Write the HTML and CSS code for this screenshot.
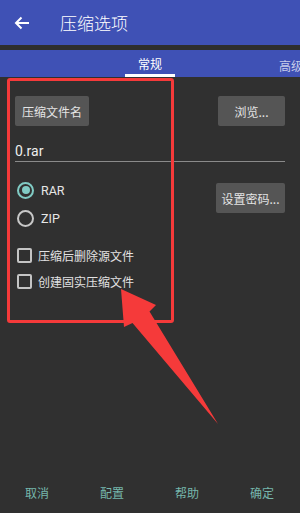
FILE: index.html
```html
<!DOCTYPE html>
<html lang="zh-CN">
<head>
  <meta charset="UTF-8">
  <meta name="viewport" content="width=device-width, initial-scale=1.0">
  <title>压缩选项</title>
  <link rel="stylesheet" href="styles.css">
</head>
<body>
  <div class="screen">
    <header class="toolbar">
      <svg class="back" width="16" height="14" viewBox="0 0 16 14">
        <path d="M15 7H2M7.5 1.5L2 7l5.5 5.5" fill="none" stroke="#fff" stroke-width="2"/>
      </svg>
      <span class="title">压缩选项</span>
    </header>
    <div class="strip"></div>
    <nav class="tabs">
      <span class="tab active">常规</span>
      <span class="tab next">高级</span>
    </nav>

    <main class="content">
      <div class="row">
        <button class="btn">压缩文件名</button>
        <button class="btn">浏览...</button>
      </div>

      <div class="field">0.rar</div>

      <div class="row options">
        <div class="radios">
          <label class="radio checked"><span class="dot"></span>RAR</label>
          <label class="radio"><span class="dot"></span>ZIP</label>
        </div>
        <button class="btn pwd">设置密码...</button>
      </div>

      <div class="checks">
        <label class="check"><span class="box"></span>压缩后删除源文件</label>
        <label class="check"><span class="box"></span>创建固实压缩文件</label>
      </div>
    </main>

    <footer class="actions">
      <span>取消</span>
      <span>配置</span>
      <span>帮助</span>
      <span>确定</span>
    </footer>

    <!-- annotation -->
    <div class="mark"></div>
    <svg class="arrow" width="300" height="513" viewBox="0 0 300 513">
      <polygon points="121,289 156,305 149.5,311.5 218,424 132.5,323 124,327" fill="#f53a3a"/>
    </svg>
  </div>
</body>
</html>
```

FILE: styles.css
```css
* {
  box-sizing: border-box;
}
body {
  margin: 0;
  background: #303030;
  font-family: "Noto Sans CJK SC", Roboto, sans-serif;
  color: #e2e2e2;
}
.screen {
  position: relative;
  width: 300px;
  height: 513px;
  display: flex;
  flex-direction: column;
  overflow: hidden;
}
.toolbar {
  height: 45px;
  background: #3f51b5;
  display: flex;
  align-items: center;
  padding-left: 14px;
}
.back {
  display: block;
}
.title {
  margin-left: 30px;
  font-size: 17px;
  font-weight: 300;
  color: #fff;
}
.strip {
  height: 5px;
  background: #2e2e2e;
}
.tabs {
  height: 27px;
  background: #3f51b5;
  position: relative;
  display: flex;
  white-space: nowrap;
}
.tab {
  flex-shrink: 0;
  font-size: 12px;
  color: #dde0f2;
  line-height: 27px;
  padding-top: 2px;
}
.tab.active {
  width: 50px;
  margin-left: 125px;
  text-align: center;
  color: #fff;
  border-bottom: 3px solid #fff;
  line-height: 23px;
}
.tab.next {
  margin-left: 104px;
  color: #c8cdea;
}
.content {
  padding: 19px 15px 0;
}
.row {
  display: flex;
  justify-content: space-between;
  align-items: flex-start;
}
.btn {
  height: 30px;
  padding: 0 7px;
  border: none;
  border-radius: 2px;
  background: #555;
  color: #e4e4e4;
  font-family: inherit;
  font-size: 12px;
}
.btn:last-child {
  width: 67px;
}
.field {
  margin-top: 13px;
  height: 23px;
  padding-top: 2px;
  font-family: Roboto, sans-serif;
  font-size: 14px;
  color: #eee;
  line-height: 20px;
  border-bottom: 1px solid #8a8a8a;
}
.options {
  margin-top: 19px;
}
.radios {
  display: flex;
  flex-direction: column;
  gap: 10px;
}
.radio {
  display: flex;
  align-items: center;
  height: 18px;
  font-family: Roboto, sans-serif;
  font-size: 12.5px;
  color: #e6e6e6;
}
.dot {
  width: 17px;
  height: 17px;
  margin: 0 7px 0 2px;
  border: 2px solid #c8c8c8;
  border-radius: 50%;
  position: relative;
}
.radio.checked .dot {
  border-color: #80cbc4;
}
.radio.checked .dot::after {
  content: "";
  position: absolute;
  left: 2.5px;
  top: 2.5px;
  width: 8px;
  height: 8px;
  border-radius: 50%;
  background: #80cbc4;
}
.btn.pwd {
  margin-top: 2px;
  width: 69px;
  padding: 0;
}
.checks {
  margin-top: 21px;
  display: flex;
  flex-direction: column;
  gap: 11px;
}
.check {
  display: flex;
  align-items: center;
  height: 15px;
  font-size: 12px;
  color: #e2e2e2;
}
.box {
  width: 15px;
  height: 15px;
  margin: 0 6px 0 2px;
  border: 2px solid #c4c4c4;
  border-radius: 2px;
}
.actions {
  margin-top: auto;
  height: 40px;
  display: grid;
  grid-template-columns: repeat(4, 1fr);
  align-items: center;
  padding-bottom: 1px;
  font-size: 12px;
  color: #76b7ac;
  text-align: center;
}
.actions span {
  margin-left: -1px;
}
.mark {
  position: absolute;
  left: 7px;
  top: 78px;
  width: 167px;
  height: 245px;
  border: 3px solid #f53a3a;
  border-radius: 3px;
}
.arrow {
  position: absolute;
  left: 0;
  top: 0;
  pointer-events: none;
}
```
